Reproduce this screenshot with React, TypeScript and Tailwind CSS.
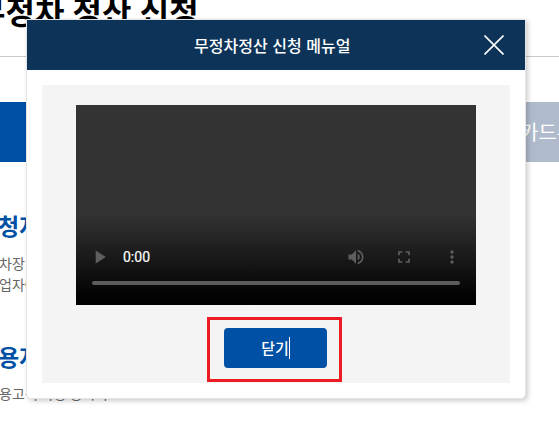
import React from "react";

function Background() {
  return (
    <div className="h-full w-full overflow-hidden whitespace-nowrap">
      <h1 className="-ml-[24px] -mt-[13px] h-[69px] text-[32px] font-bold leading-[46px] text-black [word-spacing:1px]">
        무정차 정산 신청
      </h1>
      <div className="h-px bg-[#cacaca]" />
      <div className="mt-[45px] flex h-[60px] text-[20px] leading-[60px] text-white">
        <div className="w-[280px] bg-[#0050a5]" />
        <div className="w-[279px] overflow-hidden bg-[#afbbcc] pl-[240px]">카드수</div>
      </div>
      <h2 className="-ml-[2px] mt-[45px] h-[36px] text-[23px] font-bold leading-[36px] text-[#0050a5]">
        청자격
      </h2>
      <div className="-ml-px mt-[10px] text-[14px] leading-[21px] text-[#666]">
        <p>차장 이용</p>
        <p>업자에게</p>
      </div>
      <h2 className="-ml-[2px] mt-[43px] h-[36px] text-[23px] font-bold leading-[36px] text-[#0050a5]">
        용자격
      </h2>
      <p className="-ml-px mt-[9px] text-[14px] leading-[21px] text-[#666]">
        용고객 차량 등록자
      </p>
    </div>
  );
}

function Video() {
  return (
    <div className="flex h-[200px] w-[400px] flex-col justify-end bg-[#333] bg-[linear-gradient(to_bottom,#333_0%,#333_54%,#292929_63%,#1c1c1c_74%,#0e0e0e_86%,#020202_96%,#000_100%)] px-4 pb-5">
      <div className="flex h-12 items-center text-[#5f5f5f]">
        <svg className="-ml-[3px] h-[22px] w-[22px]" viewBox="0 0 24 24" fill="currentColor">
          <path d="M7.3 5v14l11-7z" />
        </svg>
        <span className="ml-3 font-[Roboto,sans-serif] text-[14px] text-white [-webkit-text-stroke:0.2px_white]">0:00</span>
        <div className="ml-auto -mr-[2px] flex gap-7">
          <svg className="h-5 w-5" viewBox="0 0 24 24" fill="currentColor">
            <path d="M3 9v6h4l5 5V4L7 9H3zm13.500 3c0-1.770-1.020-3.290-2.500-4.030v8.050c1.480-.73 2.500-2.250 2.500-4.020zM14 3.230v2.060c2.890.86 5 3.540 5 6.710s-2.110 5.850-5 6.710v2.060c4.010-.91 7-4.490 7-8.770s-2.990-7.860-7-8.770z" />
          </svg>
          <svg className="h-5 w-5" viewBox="0 0 24 24" fill="currentColor">
            <path d="M7 14H5v5h5v-2H7v-3zm-2-4h2V7h3V5H5v5zm12 7h-3v2h5v-5h-2v3zM14 5v2h3v3h2V5h-5z" />
          </svg>
          <svg className="h-5 w-5" viewBox="0 0 24 24" fill="currentColor">
            <circle cx="12" cy="6" r="2" />
            <circle cx="12" cy="12" r="2" />
            <circle cx="12" cy="18" r="2" />
          </svg>
        </div>
      </div>
      <div className="h-1 w-[368px] rounded-full bg-[#5d5d5d]" />
    </div>
  );
}

export default function App() {
  return (
    <div className="relative h-[441px] w-[559px] overflow-hidden bg-white font-['Noto_Sans_CJK_KR',sans-serif]">
      <Background />
      <section className="absolute left-[26px] top-[19px] h-[380px] w-[500px] rounded-b-[5px] border border-[#e5e5e5] bg-white shadow-[2px_2px_5px_rgba(0,0,0,0.2)]">
        <header className="flex h-[50px] items-center bg-[#0d3458] pl-[167px] pr-[21px] text-white">
          <h2 className="whitespace-nowrap text-[16px] font-medium [word-spacing:1px]">무정차정산 신청 메뉴얼</h2>
          <button aria-label="닫기" className="ml-auto">
            <svg className="block h-5 w-5" viewBox="0 0 20 20" stroke="currentColor" strokeWidth="1.6">
              <path d="M.5.5l19 19M19.500.5l-19 19" />
            </svg>
          </button>
        </header>
        <div className="mx-[15px] mt-[15px] flex h-[298px] flex-col items-center bg-[#f4f4f4] pt-5">
          <Video />
          <div className="ml-[-3px] mt-3 flex h-[65px] w-[135px] shrink-0 items-start border-[3px] border-[#ed1c24] pl-[14px] pt-2">
            <button className="flex h-10 w-[103px] items-center justify-center rounded-[4px] bg-[#0050a5] text-[15px] font-medium text-white">
              닫기
              <span className="h-[22px] w-px bg-white" />
            </button>
          </div>
        </div>
      </section>
    </div>
  );
}
